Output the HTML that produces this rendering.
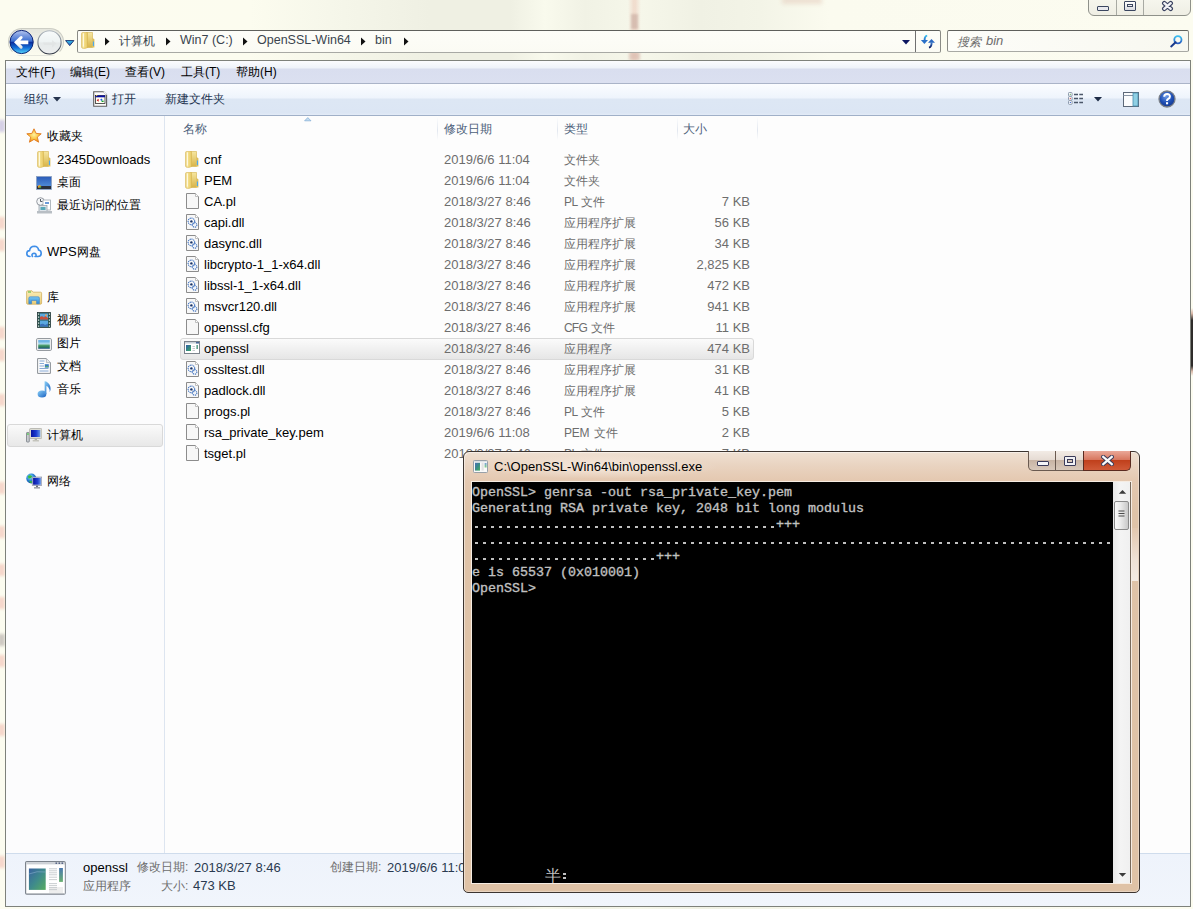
<!DOCTYPE html><html><head><meta charset="utf-8"><style>
*{margin:0;padding:0;box-sizing:border-box}
html,body{width:1193px;height:909px;overflow:hidden}
body{position:relative;background:#f9f9ee;font-family:"Liberation Sans",sans-serif;font-size:13px;color:#000}
.a{position:absolute}
.t{position:absolute;white-space:nowrap;line-height:15px}
.c{font-size:12px}
.g{color:#6d6d6d}
.h{color:#1e3450}
.hd{color:#4c607a}
.mono{font-family:"Liberation Mono",monospace;-webkit-text-stroke:0.35px #c0c0c0;font-size:13.33px;line-height:16px;color:#c0c0c0;white-space:pre}
</style></head><body>
<div class="a" style="left:0px;top:0px;width:1193px;height:909px;background:linear-gradient(90deg,#fcfcf0 0px,#fcfcef 250px,#f6f7ea 330px,#eff0e3 430px,#eff0e3 510px,#f9faed 545px,#f1f2e5 585px,#f6f7ea 640px,#f0f1e4 700px,#f3f4e7 760px,#fbfbef 830px,#fcfcf0 1193px)"></div>
<div class="a" style="left:628px;top:0px;width:13px;height:60px;background:linear-gradient(90deg,rgba(240,205,190,0),rgba(236,196,180,.5) 42%,rgba(236,196,180,.5) 58%,rgba(240,205,190,0))"></div>
<div class="a" style="left:631px;top:14px;width:7px;height:15px;background:rgba(185,150,140,.45);filter:blur(1.3px)"></div>
<div class="a" style="left:629px;top:52px;width:11px;height:8px;background:rgba(205,165,150,.45);filter:blur(1.5px)"></div>
<div class="a" style="left:634px;top:31px;width:3px;height:21px;background:rgba(236,200,186,.25)"></div>
<div class="a" style="left:782px;top:-3px;width:40px;height:7px;background:rgba(215,175,155,.32);filter:blur(2px)"></div>
<div class="a" style="left:-2px;top:120px;width:7px;height:12px;background:rgba(180,170,220,.55);filter:blur(1.5px)"></div>
<div class="a" style="left:-2px;top:217px;width:7px;height:12px;background:rgba(240,170,160,.45);filter:blur(1.5px)"></div>
<div class="a" style="left:-2px;top:239px;width:7px;height:12px;background:rgba(240,170,160,.45);filter:blur(1.5px)"></div>
<div class="a" style="left:-2px;top:327px;width:7px;height:12px;background:rgba(240,170,160,.45);filter:blur(1.5px)"></div>
<div class="a" style="left:-2px;top:349px;width:7px;height:12px;background:rgba(240,170,160,.45);filter:blur(1.5px)"></div>
<div class="a" style="left:-2px;top:394px;width:7px;height:12px;background:rgba(240,170,160,.45);filter:blur(1.5px)"></div>
<div class="a" style="left:-2px;top:482px;width:7px;height:12px;background:rgba(240,170,160,.45);filter:blur(1.5px)"></div>
<div class="a" style="left:-2px;top:526px;width:7px;height:12px;background:rgba(240,170,160,.45);filter:blur(1.5px)"></div>
<div class="a" style="left:-2px;top:564px;width:7px;height:12px;background:rgba(240,170,160,.45);filter:blur(1.5px)"></div>
<div class="a" style="left:-2px;top:597px;width:7px;height:12px;background:rgba(240,170,160,.45);filter:blur(1.5px)"></div>
<div class="a" style="left:-2px;top:634px;width:7px;height:12px;background:rgba(150,140,140,.45);filter:blur(1.5px)"></div>
<div class="a" style="left:-2px;top:655px;width:7px;height:12px;background:rgba(240,170,160,.45);filter:blur(1.5px)"></div>
<div class="a" style="left:-2px;top:724px;width:7px;height:12px;background:rgba(240,170,160,.45);filter:blur(1.5px)"></div>
<div class="a" style="left:-2px;top:856px;width:7px;height:12px;background:rgba(240,170,160,.45);filter:blur(1.5px)"></div>
<div class="a" style="left:1191px;top:308px;width:2px;height:68px;background:linear-gradient(rgba(240,200,180,0),#d8b8a8 8%,#2e2c2a 18%,#2e2c2a 85%,#d8b8a8 93%,rgba(240,200,180,0))"></div>
<div class="a" style="left:1088px;top:-4px;width:103px;height:20px;border:1px solid #8f918a;border-radius:0 0 6px 6px;background:linear-gradient(#f7f7ef,#efeee4)"></div>
<div class="a" style="left:1116px;top:0px;width:1px;height:15px;background:#a8aaa3"></div>
<div class="a" style="left:1143px;top:0px;width:1px;height:15px;background:#a8aaa3"></div>
<div class="a" style="left:1097px;top:6px;width:12px;height:5px;border:1px solid #3b4660;border-radius:1px;background:#e8e9ee"></div>
<div class="a" style="left:1124px;top:1px;width:12px;height:10px;border:1px solid #3b4660;border-radius:1px;background:linear-gradient(#fff,#d8dae0)"></div>
<div class="a" style="left:1127px;top:4px;width:6px;height:3px;border:1px solid #3b4660;background:#f0f0f2"></div>
<svg class="a" style="left:1161px;top:0px" width="13" height="12" viewBox="0 0 13 12"><path d="M3.3 3.2 L9.7 8.8 M9.7 3.2 L3.3 8.8" stroke="#3a4260" stroke-width="4.6" stroke-linecap="round"/><path d="M3.3 3.2 L9.7 8.8 M9.7 3.2 L3.3 8.8" stroke="#f2f3f6" stroke-width="2.4" stroke-linecap="round"/></svg>
<div class="a" style="left:8px;top:28px;width:56px;height:28px;border-radius:14px;background:linear-gradient(rgba(225,226,218,.9),rgba(235,236,228,.3) 70%,rgba(240,240,232,0));border:1px solid rgba(200,201,192,.9);border-bottom-color:transparent"></div>
<svg class="a" style="left:9px;top:29px" width="26" height="26" viewBox="0 0 26 26"><defs><linearGradient id="bk" x1="0" y1="0" x2="0" y2="1"><stop offset="0" stop-color="#b8c8f0"/><stop offset=".2" stop-color="#7e9ce0"/><stop offset=".47" stop-color="#3a6ed0"/><stop offset=".5" stop-color="#0a2a9a"/><stop offset=".75" stop-color="#1470d8"/><stop offset="1" stop-color="#58d8fa"/></linearGradient><linearGradient id="ar" x1="0" y1="0" x2="0" y2="1"><stop offset="0" stop-color="#fff"/><stop offset=".6" stop-color="#fff"/><stop offset="1" stop-color="#d8d8d8"/></linearGradient></defs>
<circle cx="12.6" cy="13" r="11.6" fill="url(#bk)" stroke="#0c2478" stroke-width="1"/>
<path d="M5 13.3 L11 7.5 Q12.2 6.4 13.3 7.5 Q14.1 8.6 13.2 9.6 L11.3 11.5 L19.3 11.5 L19.3 15.2 L11.3 15.2 L13.2 17.1 Q14.1 18.2 13.3 19.2 Q12.2 20.3 11 19.2 Z" fill="url(#ar)"/></svg>
<svg class="a" style="left:36px;top:29px" width="27" height="27" viewBox="0 0 27 27"><defs><linearGradient id="fw" x1="0" y1="0" x2="0" y2="1"><stop offset="0" stop-color="#f8fbfb"/><stop offset=".48" stop-color="#eef3f3"/><stop offset=".52" stop-color="#e6eaea"/><stop offset="1" stop-color="#eceeee"/></linearGradient><linearGradient id="fws" x1="0" y1="0" x2="0" y2="1"><stop offset="0" stop-color="#b0b8c0"/><stop offset=".5" stop-color="#808890"/><stop offset="1" stop-color="#2e3442"/></linearGradient></defs>
<circle cx="13.5" cy="13.4" r="11.6" fill="url(#fw)" stroke="url(#fws)" stroke-width="1.1"/>
<path d="M7 13.5 L16 13.5 L16 11 L20.5 14.5 L16 18.5 L16 16 L8 16 Z" fill="#dfe3e3" opacity=".7"/></svg>
<svg class="a" style="left:65px;top:40px" width="10" height="7" viewBox="0 0 10 7"><defs><linearGradient id="dd" x1="0" y1="0" x2="0" y2="1"><stop offset="0" stop-color="#38c8f0"/><stop offset="1" stop-color="#2a5cc0"/></linearGradient></defs><path d="M0.6 0.6 L8.9 0.6 L4.75 5.6 Z" fill="url(#dd)" stroke="#10286a" stroke-width=".9" stroke-linejoin="round"/></svg>
<div class="a" style="left:77px;top:30px;width:864px;height:23px;border:1px solid #5f605c;border-bottom-color:#a8a9a4;border-left-color:#8a8b86;border-right-color:#8a8b86;border-radius:2px;background:linear-gradient(#fdfdf8,#fbfbf4)"></div>
<div class="a" style="left:915px;top:31px;width:1px;height:21px;background:#707070"></div>
<svg class="a" style="left:81px;top:32px" width="14" height="17" viewBox="0 0 14 17"><defs><linearGradient id="fa" x1="0" y1="0" x2="1" y2="0"><stop offset="0" stop-color="#e2c25c"/><stop offset=".25" stop-color="#fbf0b8"/><stop offset=".45" stop-color="#f4de88"/><stop offset="1" stop-color="#e6c865"/></linearGradient><linearGradient id="fab" x1="0" y1="0" x2="0" y2="1"><stop offset="0" stop-color="#f6e6a0"/><stop offset="1" stop-color="#d8b448"/></linearGradient></defs>
<path d="M5.5 0.5 L11.5 0.5 L11.5 15.5 L6 15.5 Z" fill="url(#fab)" stroke="#d4b24c" stroke-width=".6"/><path d="M11.5 6 L13.4 7.2 L13.4 15.6 L11.5 15.6Z" fill="#dcbc58"/><rect x="11.9" y="9.5" width="1.1" height="4.5" fill="#4aa8ec"/>
<path d="M0.6 1.5 Q0.6 0.5 1.6 0.5 L6.5 0.5 L6.5 15.6 Q4 16.8 1.6 16.3 Q0.6 16.1 0.6 15 Z" fill="url(#fa)" stroke="#d6b650" stroke-width=".6"/><path d="M2.4 1.6 L2.4 14.5" stroke="#fffbe8" stroke-width="1.1" opacity=".9"/></svg>
<svg class="a" style="left:105px;top:37px" width="5" height="9" viewBox="0 0 5 9"><path d="M0 0.5 L4.5 4.5 L0 8.5 Z" fill="#111"/></svg>
<svg class="a" style="left:166px;top:37px" width="5" height="9" viewBox="0 0 5 9"><path d="M0 0.5 L4.5 4.5 L0 8.5 Z" fill="#111"/></svg>
<svg class="a" style="left:243px;top:37px" width="5" height="9" viewBox="0 0 5 9"><path d="M0 0.5 L4.5 4.5 L0 8.5 Z" fill="#111"/></svg>
<svg class="a" style="left:361px;top:37px" width="5" height="9" viewBox="0 0 5 9"><path d="M0 0.5 L4.5 4.5 L0 8.5 Z" fill="#111"/></svg>
<svg class="a" style="left:404px;top:37px" width="5" height="9" viewBox="0 0 5 9"><path d="M0 0.5 L4.5 4.5 L0 8.5 Z" fill="#111"/></svg>
<div class="t " style="left:119px;top:33px;color:#3a444e"><span class="c">计算机</span></div>
<div class="t " style="left:180px;top:33px;color:#3a444e;font-size:12.5px">Win7 (C:)</div>
<div class="t " style="left:257px;top:33px;color:#3a444e;font-size:12.5px">OpenSSL-Win64</div>
<div class="t " style="left:375px;top:33px;color:#3a444e;font-size:12.5px">bin</div>
<svg class="a" style="left:902px;top:40px" width="8" height="5" viewBox="0 0 8 5"><path d="M0 0 L8 0 L4 4.5 Z" fill="#0c1660"/></svg>
<svg class="a" style="left:920px;top:33px" width="16" height="16" viewBox="0 0 16 16"><defs><linearGradient id="rf1" x1="0" y1="0" x2="0" y2="1"><stop offset="0" stop-color="#38c0f0"/><stop offset="1" stop-color="#2a6ac8"/></linearGradient><linearGradient id="rf2" x1="0" y1="0" x2="0" y2="1"><stop offset="0" stop-color="#3a80d8"/><stop offset="1" stop-color="#0a1a60"/></linearGradient></defs>
<path d="M7.2 2.6 Q4.6 3 4.6 7.2" stroke="url(#rf1)" stroke-width="1.9" fill="none"/><path d="M0.9 7 L8 7 L4.4 10.9 Z" fill="#2a70c8"/>
<path d="M11.6 9.4 Q11.6 13.8 9 14.6" stroke="url(#rf2)" stroke-width="1.9" fill="none"/><path d="M8 9.7 L15 9.7 L11.5 6 Z" fill="#2a68c0"/></svg>
<div class="a" style="left:947px;top:30px;width:242px;height:22px;border:1px solid #5f605c;border-bottom-color:#a8a9a4;border-left-color:#8a8b86;border-right-color:#8a8b86;border-radius:2px;background:linear-gradient(90deg,#fdfdf9,#f8f8f0)"></div>
<div class="t " style="left:957px;top:34px;color:#6e6e6e;font-style:italic"><span class="c">搜索</span></div>
<div class="t " style="left:986px;top:33px;color:#6e6e6e;font-style:italic">bin</div>
<svg class="a" style="left:1169px;top:35px" width="14" height="14" viewBox="0 0 14 14"><defs><linearGradient id="sr" x1="0" y1="0" x2="0" y2="1"><stop offset="0" stop-color="#3cc0f0"/><stop offset="1" stop-color="#2a5cc0"/></linearGradient></defs><circle cx="8.9" cy="4.8" r="3.6" stroke="url(#sr)" stroke-width="1.8" fill="none"/><path d="M6.6 7.3 L2.2 11.4" stroke="#1a3a8c" stroke-width="2" stroke-linecap="round"/></svg>
<div class="a" style="left:5px;top:60px;width:1186px;height:847px;border:1px solid #7e817b;background:#fdfdfd"></div>
<div class="a" style="left:6px;top:61px;width:1184px;height:23px;background:linear-gradient(#fbfcfe 0,#eef2f9 7px,#d9deef 8px,#dbe0f0 22px);border-bottom:1px solid #aab4c8"></div>
<div class="t " style="left:16px;top:65px;font-size:12px"><span class="c">文件</span>(F)</div>
<div class="t " style="left:70px;top:65px;font-size:12px"><span class="c">编辑</span>(E)</div>
<div class="t " style="left:125px;top:65px;font-size:12px"><span class="c">查看</span>(V)</div>
<div class="t " style="left:181px;top:65px;font-size:12px"><span class="c">工具</span>(T)</div>
<div class="t " style="left:236px;top:65px;font-size:12px"><span class="c">帮助</span>(H)</div>
<div class="a" style="left:6px;top:84px;width:1184px;height:32px;background:linear-gradient(#fbfdff 0,#eef4fc 14px,#dde7f4 15px,#dce6f4 29px,#e4ecf7 31px);border-bottom:1px solid #a0b0c8"></div>
<div class="t h" style="left:24px;top:92px;font-size:12px"><span class="c">组织</span></div>
<svg class="a" style="left:53px;top:97px" width="8" height="5" viewBox="0 0 8 5"><path d="M0 0 L8 0 L4 4.5Z" fill="#26344d"/></svg>
<svg class="a" style="left:93px;top:91px" width="15" height="17" viewBox="0 0 15 17"><path d="M0.7 0.7 H10.6 L13.6 3.7 V15.3 H0.7Z" fill="#fbfbfb" stroke="#5e5e5e" stroke-width="1.1"/><path d="M10.6 0.7 L13.6 3.7" stroke="#fff" stroke-width="1"/><rect x="2.4" y="4.4" width="9.6" height="8" fill="#fffff4" stroke="#111" stroke-width=".7"/><rect x="2.4" y="4.4" width="9.6" height="1.9" fill="#0a10a0"/><circle cx="3.6" cy="4.6" r=".7" fill="#f0d020"/><path d="M3.6 9.3 L5.6 7.8 L5.6 10.8Z" fill="#d01010"/><path d="M8.4 7.6 L9.6 8.8 L8.4 10 L7.2 8.8Z" fill="#1a60e0"/><rect x="8.6" y="9.6" width="2" height="1.4" fill="#18a030"/></svg>
<div class="t h" style="left:112px;top:92px;font-size:12px"><span class="c">打开</span></div>
<div class="t h" style="left:165px;top:92px;font-size:12px"><span class="c">新建文件夹</span></div>
<svg class="a" style="left:1067px;top:92px" width="18" height="14" viewBox="0 0 18 14"><g fill="#fff" stroke="#8090a4" stroke-width=".9"><rect x="1.5" y="0.5" width="3.6" height="3.6" rx=".8"/><rect x="1.5" y="4.6" width="3.6" height="3.6" rx=".8"/><rect x="1.5" y="8.7" width="3.6" height="3.6" rx=".8"/></g><rect x="2.8" y="1.8" width="1" height="1" fill="#3a9a3a"/><rect x="2.8" y="5.9" width="1" height="1" fill="#e02020"/><rect x="2.8" y="10" width="1" height="1" fill="#2050d0"/>
<g stroke="#4a5668" stroke-width="1.3"><path d="M7 2.5 H11 M12.3 2.5 H16 M7 6.5 H11 M12.3 6.5 H16 M7 10.5 H11 M12.3 10.5 H16"/></g></svg>
<svg class="a" style="left:1094px;top:97px" width="8" height="5" viewBox="0 0 8 5"><path d="M0 0 L8 0 L4 4.5Z" fill="#1d2b45"/></svg>
<svg class="a" style="left:1123px;top:92px" width="17" height="15" viewBox="0 0 17 15"><rect x="0.5" y="0.5" width="15" height="14" fill="#fbfcfd" stroke="#5c6878"/><path d="M0.5 3.5 H10" stroke="#8a96a6"/><rect x="10" y="1" width="5" height="13" fill="#8fd0e4" stroke="#4a90b0" stroke-width=".8"/></svg>
<svg class="a" style="left:1158px;top:90px" width="18" height="18" viewBox="0 0 18 18"><defs><radialGradient id="hp" cx="45%" cy="35%" r="65%"><stop offset="0" stop-color="#6a9ae8"/><stop offset=".6" stop-color="#1f4fb4"/><stop offset="1" stop-color="#14378c"/></radialGradient></defs><circle cx="9" cy="9" r="8" fill="url(#hp)" stroke="#7b8088" stroke-width="1.3"/>
<path d="M6.2 6.8 Q6.3 4 9.1 4 Q12 4.1 11.9 6.6 Q11.8 8.2 9.9 9.1 Q9 9.6 9 11" stroke="#fff" stroke-width="2" fill="none"/><rect x="8" y="12.2" width="2.1" height="2.1" fill="#fff"/></svg>
<div class="a" style="left:6px;top:116px;width:158px;height:737px;background:#fcfcfd"></div>
<div class="a" style="left:164px;top:116px;width:1px;height:737px;background:#dde5f0"></div>
<svg class="a" style="left:26px;top:128px" width="16" height="15" viewBox="0 0 16 15"><defs><radialGradient id="st" cx="50%" cy="45%" r="55%"><stop offset="0" stop-color="#fff1a0"/><stop offset=".6" stop-color="#f9c23c"/><stop offset="1" stop-color="#ef8a1a"/></radialGradient></defs><path d="M8 0.8 L10.1 5.4 L15.2 5.8 L11.3 9.1 L12.6 14.2 L8 11.4 L3.4 14.2 L4.7 9.1 L0.8 5.8 L5.9 5.4 Z" fill="url(#st)" stroke="#e07a20" stroke-width=".9"/></svg>
<div class="t " style="left:47px;top:129px;font-size:12px"><span class="c">收藏夹</span></div>
<svg class="a" style="left:37px;top:151px" width="14" height="17" viewBox="0 0 14 17"><defs><linearGradient id="f1" x1="0" y1="0" x2="1" y2="0"><stop offset="0" stop-color="#e2c25c"/><stop offset=".25" stop-color="#fbf0b8"/><stop offset=".45" stop-color="#f4de88"/><stop offset="1" stop-color="#e6c865"/></linearGradient><linearGradient id="f1b" x1="0" y1="0" x2="0" y2="1"><stop offset="0" stop-color="#f6e6a0"/><stop offset="1" stop-color="#d8b448"/></linearGradient></defs>
<path d="M5.5 0.5 L11.5 0.5 L11.5 15.5 L6 15.5 Z" fill="url(#f1b)" stroke="#d4b24c" stroke-width=".6"/><path d="M11.5 6 L13.4 7.2 L13.4 15.6 L11.5 15.6Z" fill="#dcbc58"/><rect x="11.9" y="9.5" width="1.1" height="4.5" fill="#4aa8ec"/>
<path d="M0.6 1.5 Q0.6 0.5 1.6 0.5 L6.5 0.5 L6.5 15.6 Q4 16.8 1.6 16.3 Q0.6 16.1 0.6 15 Z" fill="url(#f1)" stroke="#d6b650" stroke-width=".6"/><path d="M2.4 1.6 L2.4 14.5" stroke="#fffbe8" stroke-width="1.1" opacity=".9"/></svg>
<div class="t " style="left:57px;top:152px;">2345Downloads</div>
<svg class="a" style="left:36px;top:176px" width="16" height="14" viewBox="0 0 16 14"><defs><linearGradient id="dk" x1="0" y1="0" x2="0" y2="1"><stop offset="0" stop-color="#2a5ab8"/><stop offset="1" stop-color="#5a9ae0"/></linearGradient></defs><rect x="0.5" y="0.5" width="15" height="13" fill="url(#dk)" stroke="#8aa0c0" stroke-width=".8"/><rect x="1" y="10" width="14" height="3" fill="#2a2f3a"/><circle cx="3.5" cy="10.5" r="1.6" fill="#f0a030"/><circle cx="4.2" cy="11.2" r="1" fill="#40a040"/></svg>
<div class="t " style="left:57px;top:175px;font-size:12px"><span class="c">桌面</span></div>
<svg class="a" style="left:36px;top:197px" width="16" height="17" viewBox="0 0 16 17"><circle cx="4.5" cy="4.5" r="3.8" fill="#f4f6f8" stroke="#8a9098" stroke-width=".9"/><path d="M4.5 2 V4.5 H6.5" stroke="#404650" stroke-width=".9" fill="none"/><rect x="7" y="3" width="7.5" height="10" fill="#fff" stroke="#a0a8b0" stroke-width=".8"/><rect x="9" y="5" width="4" height="2" fill="#6a9ad8"/><rect x="3" y="8.5" width="8" height="6" fill="#dde4ea" stroke="#9aa3ac" stroke-width=".8"/><rect x="4.5" y="10" width="5" height="3" fill="#58a8b8"/><rect x="1" y="14" width="15" height="2.5" fill="#b8bec4"/></svg>
<div class="t " style="left:57px;top:198px;font-size:12px"><span class="c">最近访问的位置</span></div>
<svg class="a" style="left:26px;top:245px" width="16" height="13" viewBox="0 0 16 13"><path d="M4 11.5 Q0.8 11.5 0.8 8.5 Q0.8 5.8 3.6 5.6 Q4.2 1.2 8.4 1.2 Q12 1.4 12.6 5 Q15.2 5.4 15.2 8.3 Q15.2 11.5 12 11.5 L9 11.5 M6.5 11.5 Q5 9 8 8.3 Q10.5 8.5 10 11" stroke="#3f8ee8" stroke-width="1.6" fill="none" stroke-linecap="round"/></svg>
<div class="t " style="left:47px;top:244px;">WPS<span class="c">网盘</span></div>
<svg class="a" style="left:26px;top:290px" width="17" height="15" viewBox="0 0 17 15"><defs><linearGradient id="lbf" x1="0" y1="0" x2="0" y2="1"><stop offset="0" stop-color="#fbeeb8"/><stop offset="1" stop-color="#e8cc78"/></linearGradient><linearGradient id="lbb" x1="0" y1="0" x2="0" y2="1"><stop offset="0" stop-color="#7ac8f4"/><stop offset="1" stop-color="#2a88d8"/></linearGradient></defs><path d="M0.6 2 Q0.6 0.8 1.8 0.8 L6 0.8 L7.2 2.2 L14.6 2.2 Q15.6 2.2 15.6 3.2 L15.6 13 Q15.6 14.2 14.4 14.2 L1.8 14.2 Q0.6 14.2 0.6 13Z" fill="url(#lbf)" stroke="#d0b060" stroke-width=".8"/><rect x="2" y="1.4" width="3" height="1.2" fill="#6ac04a"/><path d="M2.8 13.8 L2.8 8.2 Q2.8 6.8 4.2 6.8 L12 6.8 Q13.4 6.8 13.4 8.2 L13.4 13.8 L10.6 13.8 L10.6 10.4 L5.6 10.4 L5.6 13.8Z" fill="url(#lbb)" stroke="#3a80c8" stroke-width=".6"/></svg>
<div class="t " style="left:47px;top:290px;font-size:12px"><span class="c">库</span></div>
<svg class="a" style="left:37px;top:312px" width="14" height="16" viewBox="0 0 14 16"><rect x="0.5" y="0.5" width="13" height="15" fill="#24504c" stroke="#1a3030" stroke-width=".7"/><rect x="3" y="1.5" width="8" height="6" fill="#5aa8e0"/><rect x="3" y="8.5" width="8" height="6" fill="#5aa8e0"/><path d="M3 5 Q5 3.5 7 5.5 L8 4 L11 6 V7.5 H3Z" fill="#c8503a"/><path d="M3 12.5 Q6 11 8 13 L11 11.5 V14.5 H3Z" fill="#3a70b8"/><circle cx="9" cy="3.2" r="1" fill="#f0a050"/><g fill="#f0f4f4"><rect x="1" y="1.5" width="1.2" height="1.2"/><rect x="1" y="4.5" width="1.2" height="1.2"/><rect x="1" y="7.5" width="1.2" height="1.2"/><rect x="1" y="10.5" width="1.2" height="1.2"/><rect x="1" y="13.5" width="1.2" height="1.2"/><rect x="11.8" y="1.5" width="1.2" height="1.2"/><rect x="11.8" y="4.5" width="1.2" height="1.2"/><rect x="11.8" y="7.5" width="1.2" height="1.2"/><rect x="11.8" y="10.5" width="1.2" height="1.2"/><rect x="11.8" y="13.5" width="1.2" height="1.2"/></g></svg>
<div class="t " style="left:57px;top:313px;font-size:12px"><span class="c">视频</span></div>
<svg class="a" style="left:36px;top:338px" width="16" height="13" viewBox="0 0 16 13"><defs><linearGradient id="pc" x1="0" y1="0" x2="0" y2="1"><stop offset="0" stop-color="#4aa0e0"/><stop offset=".45" stop-color="#b8e0f0"/><stop offset=".55" stop-color="#58a878"/><stop offset=".8" stop-color="#2a7a58"/><stop offset="1" stop-color="#2a5a90"/></linearGradient></defs><rect x="0.6" y="0.6" width="14.8" height="11.8" rx="1" fill="#f8f8f8" stroke="#8a9096" stroke-width="1"/><rect x="2.2" y="2.2" width="11.6" height="8.6" fill="url(#pc)"/></svg>
<div class="t " style="left:57px;top:336px;font-size:12px"><span class="c">图片</span></div>
<svg class="a" style="left:37px;top:358px" width="14" height="16" viewBox="0 0 14 16"><path d="M0.6 0.6 H9.4 L13.4 4.6 V15.4 H0.6Z" fill="#fcfcfd" stroke="#8a9096" stroke-width="1"/><path d="M9.4 0.6 V4.6 H13.4" fill="#e8eaee" stroke="#a0a6ac" stroke-width=".7"/><g stroke="#7aa0d0" stroke-width=".9"><path d="M2.5 3 H7.5 M2.5 5.5 H7 M2.5 8 H7 M2.5 10.5 H11.5 M2.5 13 H11.5"/></g><rect x="7.8" y="6.2" width="4" height="3.4" fill="#3a7ac0"/><rect x="8.3" y="8" width="3" height="1.2" fill="#58a868"/></svg>
<div class="t " style="left:57px;top:359px;font-size:12px"><span class="c">文档</span></div>
<svg class="a" style="left:37px;top:380px" width="15" height="18" viewBox="0 0 15 18"><defs><linearGradient id="mu" x1="0" y1="0" x2="1" y2="1"><stop offset="0" stop-color="#8ad0f8"/><stop offset="1" stop-color="#1a60c0"/></linearGradient></defs><ellipse cx="5" cy="14" rx="4.4" ry="3.5" fill="url(#mu)"/><path d="M7.6 14 V1.2 Q8.4 1.2 9.2 1.6 Q13.8 4.5 13.6 9.2 Q13.4 11 12.6 12 Q13 9.5 11.4 7.4 Q10.6 6.4 9.4 6 V14Z" fill="url(#mu)"/></svg>
<div class="t " style="left:57px;top:382px;font-size:12px"><span class="c">音乐</span></div>
<div class="a" style="left:7px;top:424px;width:156px;height:23px;border:1px solid #d9d9d9;border-radius:3px;background:linear-gradient(#fafafa,#e8e8e8)"></div>
<svg class="a" style="left:26px;top:428px" width="16" height="16" viewBox="0 0 16 16"><defs><linearGradient id="cm" x1="0" y1="0" x2="1" y2="0"><stop offset="0" stop-color="#0814a0"/><stop offset=".55" stop-color="#1a3ad0"/><stop offset="1" stop-color="#6a9ae8"/></linearGradient></defs><rect x="0.5" y="4.5" width="2.8" height="9.5" rx=".6" fill="#c8ccd0" stroke="#6a7078" stroke-width=".7"/><rect x="1.1" y="5.4" width="1.6" height="1.3" fill="#40d040"/><rect x="3.6" y="0.5" width="12.2" height="10" rx="1" fill="#dcdcd4" stroke="#a8a8a0" stroke-width=".7"/><rect x="5" y="2" width="9.3" height="7" fill="url(#cm)"/><rect x="8.6" y="10.5" width="2.4" height="1.6" fill="#b4b4ac"/><rect x="6.6" y="12.1" width="6.4" height="1.5" rx=".5" fill="#c4c4bc"/></svg>
<div class="t " style="left:47px;top:428px;font-size:12px"><span class="c">计算机</span></div>
<svg class="a" style="left:26px;top:473px" width="16" height="16" viewBox="0 0 16 16"><defs><radialGradient id="gl" cx="40%" cy="35%" r="60%"><stop offset="0" stop-color="#a8e0ff"/><stop offset=".6" stop-color="#2a88d8"/><stop offset="1" stop-color="#1050a8"/></radialGradient><linearGradient id="nm" x1="0" y1="0" x2="1" y2="0"><stop offset="0" stop-color="#0814a0"/><stop offset=".6" stop-color="#2040d0"/><stop offset="1" stop-color="#6a9ae8"/></linearGradient></defs><circle cx="5.3" cy="5.5" r="5" fill="url(#gl)"/><path d="M2 3 Q4.5 1.2 6.2 3.6 Q5 6 2.4 5.4Z M3 8 Q5.5 7.2 6.5 9.5 Q4.5 10.8 3 8Z" fill="#38c038"/><rect x="6.2" y="4" width="9.6" height="8.6" fill="#d0d4dc" stroke="#8088a0" stroke-width=".6"/><rect x="7.1" y="4.9" width="7.8" height="6.8" fill="url(#nm)"/><rect x="10" y="12.6" width="2" height="1.6" fill="#6a7080"/><rect x="8" y="14.2" width="6" height="1.3" fill="#8a9098"/></svg>
<div class="t " style="left:47px;top:474px;font-size:12px"><span class="c">网络</span></div>
<div class="t hd" style="left:183px;top:122px;font-size:12px"><span class="c">名称</span></div>
<div class="t hd" style="left:444px;top:122px;font-size:12px"><span class="c">修改日期</span></div>
<div class="t hd" style="left:564px;top:122px;font-size:12px"><span class="c">类型</span></div>
<div class="t hd" style="left:683px;top:122px;font-size:12px"><span class="c">大小</span></div>
<div class="a" style="left:437px;top:116px;width:1px;height:24px;background:linear-gradient(#fff,#e2e7ef 60%,rgba(255,255,255,0))"></div>
<div class="a" style="left:557px;top:116px;width:1px;height:24px;background:linear-gradient(#fff,#e2e7ef 60%,rgba(255,255,255,0))"></div>
<div class="a" style="left:677px;top:116px;width:1px;height:24px;background:linear-gradient(#fff,#e2e7ef 60%,rgba(255,255,255,0))"></div>
<div class="a" style="left:757px;top:116px;width:1px;height:24px;background:linear-gradient(#fff,#e2e7ef 60%,rgba(255,255,255,0))"></div>
<svg class="a" style="left:304px;top:117px" width="8" height="5" viewBox="0 0 8 5"><path d="M0.6 3.8 L3.8 0.6 L7 3.8Z" fill="#c4dcf0" stroke="#7eaad4" stroke-width=".7"/></svg>
<div class="a" style="left:180px;top:338px;width:574px;height:22px;border:1px solid #d9d9d9;border-radius:3px;background:linear-gradient(#fbfbfb,#e6e6e6)"></div>
<svg class="a" style="left:185px;top:151px" width="14" height="17" viewBox="0 0 14 17"><defs><linearGradient id="fr0" x1="0" y1="0" x2="1" y2="0"><stop offset="0" stop-color="#e2c25c"/><stop offset=".25" stop-color="#fbf0b8"/><stop offset=".45" stop-color="#f4de88"/><stop offset="1" stop-color="#e6c865"/></linearGradient><linearGradient id="fr0b" x1="0" y1="0" x2="0" y2="1"><stop offset="0" stop-color="#f6e6a0"/><stop offset="1" stop-color="#d8b448"/></linearGradient></defs>
<path d="M5.5 0.5 L11.5 0.5 L11.5 15.5 L6 15.5 Z" fill="url(#fr0b)" stroke="#d4b24c" stroke-width=".6"/><path d="M11.5 6 L13.4 7.2 L13.4 15.6 L11.5 15.6Z" fill="#dcbc58"/><rect x="11.9" y="9.5" width="1.1" height="4.5" fill="#4aa8ec"/>
<path d="M0.6 1.5 Q0.6 0.5 1.6 0.5 L6.5 0.5 L6.5 15.6 Q4 16.8 1.6 16.3 Q0.6 16.1 0.6 15 Z" fill="url(#fr0)" stroke="#d6b650" stroke-width=".6"/><path d="M2.4 1.6 L2.4 14.5" stroke="#fffbe8" stroke-width="1.1" opacity=".9"/></svg>
<div class="t " style="left:204px;top:152px;">cnf</div>
<div class="t g" style="left:444px;top:152px;">2019/6/6 11:04</div>
<div class="t g" style="left:564px;top:152px;"><span class="c">文件夹</span></div>
<svg class="a" style="left:185px;top:172px" width="14" height="17" viewBox="0 0 14 17"><defs><linearGradient id="fr1" x1="0" y1="0" x2="1" y2="0"><stop offset="0" stop-color="#e2c25c"/><stop offset=".25" stop-color="#fbf0b8"/><stop offset=".45" stop-color="#f4de88"/><stop offset="1" stop-color="#e6c865"/></linearGradient><linearGradient id="fr1b" x1="0" y1="0" x2="0" y2="1"><stop offset="0" stop-color="#f6e6a0"/><stop offset="1" stop-color="#d8b448"/></linearGradient></defs>
<path d="M5.5 0.5 L11.5 0.5 L11.5 15.5 L6 15.5 Z" fill="url(#fr1b)" stroke="#d4b24c" stroke-width=".6"/><path d="M11.5 6 L13.4 7.2 L13.4 15.6 L11.5 15.6Z" fill="#dcbc58"/><rect x="11.9" y="9.5" width="1.1" height="4.5" fill="#4aa8ec"/>
<path d="M0.6 1.5 Q0.6 0.5 1.6 0.5 L6.5 0.5 L6.5 15.6 Q4 16.8 1.6 16.3 Q0.6 16.1 0.6 15 Z" fill="url(#fr1)" stroke="#d6b650" stroke-width=".6"/><path d="M2.4 1.6 L2.4 14.5" stroke="#fffbe8" stroke-width="1.1" opacity=".9"/></svg>
<div class="t " style="left:204px;top:173px;">PEM</div>
<div class="t g" style="left:444px;top:173px;">2019/6/6 11:04</div>
<div class="t g" style="left:564px;top:173px;"><span class="c">文件夹</span></div>
<svg class="a" style="left:186px;top:193px" width="13" height="16" viewBox="0 0 13 16"><path d="M0.5 0.5 H9.5 L12.5 3.5 V15.5 H0.5Z" fill="#f7f7f7" stroke="#8c8c8c" stroke-width="1"/><path d="M9.5 0.5 V3.5 H12.5" fill="#fff" stroke="#b0b0b0" stroke-width=".8"/></svg>
<div class="t " style="left:204px;top:194px;">CA.pl</div>
<div class="t g" style="left:444px;top:194px;">2018/3/27 8:46</div>
<div class="t g" style="left:564px;top:195px;font-size:12px;letter-spacing:-0.4px">PL</div>
<div class="t g" style="left:581px;top:194px;"><span class="c">文件</span></div>
<div class="t g" style="right:443px;top:194px;">7 KB</div>
<svg class="a" style="left:186px;top:214px" width="13" height="16" viewBox="0 0 13 16"><path d="M0.5 0.5 H9.5 L12.5 3.5 V15.5 H0.5Z" fill="#f7f7f7" stroke="#8c8c8c" stroke-width="1"/><path d="M9.5 0.5 V3.5 H12.5" fill="#fff" stroke="#b0b0b0" stroke-width=".8"/><g fill="none" stroke="#3f72c0" stroke-width="1.1" stroke-dasharray="1.2 .7"><circle cx="5.4" cy="7.4" r="3.3"/><circle cx="8.6" cy="10.9" r="2.3"/></g><circle cx="5.4" cy="7.4" r="1.2" fill="#1a3468"/><circle cx="8.6" cy="10.9" r=".8" fill="#e8f0fa"/></svg>
<div class="t " style="left:204px;top:215px;">capi.dll</div>
<div class="t g" style="left:444px;top:215px;">2018/3/27 8:46</div>
<div class="t g" style="left:564px;top:215px;"><span class="c">应用程序扩展</span></div>
<div class="t g" style="right:443px;top:215px;">56 KB</div>
<svg class="a" style="left:186px;top:235px" width="13" height="16" viewBox="0 0 13 16"><path d="M0.5 0.5 H9.5 L12.5 3.5 V15.5 H0.5Z" fill="#f7f7f7" stroke="#8c8c8c" stroke-width="1"/><path d="M9.5 0.5 V3.5 H12.5" fill="#fff" stroke="#b0b0b0" stroke-width=".8"/><g fill="none" stroke="#3f72c0" stroke-width="1.1" stroke-dasharray="1.2 .7"><circle cx="5.4" cy="7.4" r="3.3"/><circle cx="8.6" cy="10.9" r="2.3"/></g><circle cx="5.4" cy="7.4" r="1.2" fill="#1a3468"/><circle cx="8.6" cy="10.9" r=".8" fill="#e8f0fa"/></svg>
<div class="t " style="left:204px;top:236px;">dasync.dll</div>
<div class="t g" style="left:444px;top:236px;">2018/3/27 8:46</div>
<div class="t g" style="left:564px;top:236px;"><span class="c">应用程序扩展</span></div>
<div class="t g" style="right:443px;top:236px;">34 KB</div>
<svg class="a" style="left:186px;top:256px" width="13" height="16" viewBox="0 0 13 16"><path d="M0.5 0.5 H9.5 L12.5 3.5 V15.5 H0.5Z" fill="#f7f7f7" stroke="#8c8c8c" stroke-width="1"/><path d="M9.5 0.5 V3.5 H12.5" fill="#fff" stroke="#b0b0b0" stroke-width=".8"/><g fill="none" stroke="#3f72c0" stroke-width="1.1" stroke-dasharray="1.2 .7"><circle cx="5.4" cy="7.4" r="3.3"/><circle cx="8.6" cy="10.9" r="2.3"/></g><circle cx="5.4" cy="7.4" r="1.2" fill="#1a3468"/><circle cx="8.6" cy="10.9" r=".8" fill="#e8f0fa"/></svg>
<div class="t " style="left:204px;top:257px;">libcrypto-1_1-x64.dll</div>
<div class="t g" style="left:444px;top:257px;">2018/3/27 8:46</div>
<div class="t g" style="left:564px;top:257px;"><span class="c">应用程序扩展</span></div>
<div class="t g" style="right:443px;top:257px;">2,825 KB</div>
<svg class="a" style="left:186px;top:277px" width="13" height="16" viewBox="0 0 13 16"><path d="M0.5 0.5 H9.5 L12.5 3.5 V15.5 H0.5Z" fill="#f7f7f7" stroke="#8c8c8c" stroke-width="1"/><path d="M9.5 0.5 V3.5 H12.5" fill="#fff" stroke="#b0b0b0" stroke-width=".8"/><g fill="none" stroke="#3f72c0" stroke-width="1.1" stroke-dasharray="1.2 .7"><circle cx="5.4" cy="7.4" r="3.3"/><circle cx="8.6" cy="10.9" r="2.3"/></g><circle cx="5.4" cy="7.4" r="1.2" fill="#1a3468"/><circle cx="8.6" cy="10.9" r=".8" fill="#e8f0fa"/></svg>
<div class="t " style="left:204px;top:278px;">libssl-1_1-x64.dll</div>
<div class="t g" style="left:444px;top:278px;">2018/3/27 8:46</div>
<div class="t g" style="left:564px;top:278px;"><span class="c">应用程序扩展</span></div>
<div class="t g" style="right:443px;top:278px;">472 KB</div>
<svg class="a" style="left:186px;top:298px" width="13" height="16" viewBox="0 0 13 16"><path d="M0.5 0.5 H9.5 L12.5 3.5 V15.5 H0.5Z" fill="#f7f7f7" stroke="#8c8c8c" stroke-width="1"/><path d="M9.5 0.5 V3.5 H12.5" fill="#fff" stroke="#b0b0b0" stroke-width=".8"/><g fill="none" stroke="#3f72c0" stroke-width="1.1" stroke-dasharray="1.2 .7"><circle cx="5.4" cy="7.4" r="3.3"/><circle cx="8.6" cy="10.9" r="2.3"/></g><circle cx="5.4" cy="7.4" r="1.2" fill="#1a3468"/><circle cx="8.6" cy="10.9" r=".8" fill="#e8f0fa"/></svg>
<div class="t " style="left:204px;top:299px;">msvcr120.dll</div>
<div class="t g" style="left:444px;top:299px;">2018/3/27 8:46</div>
<div class="t g" style="left:564px;top:299px;"><span class="c">应用程序扩展</span></div>
<div class="t g" style="right:443px;top:299px;">941 KB</div>
<svg class="a" style="left:186px;top:319px" width="13" height="16" viewBox="0 0 13 16"><path d="M0.5 0.5 H9.5 L12.5 3.5 V15.5 H0.5Z" fill="#f7f7f7" stroke="#8c8c8c" stroke-width="1"/><path d="M9.5 0.5 V3.5 H12.5" fill="#fff" stroke="#b0b0b0" stroke-width=".8"/></svg>
<div class="t " style="left:204px;top:320px;">openssl.cfg</div>
<div class="t g" style="left:444px;top:320px;">2018/3/27 8:46</div>
<div class="t g" style="left:564px;top:321px;font-size:12px;letter-spacing:-0.8px">CFG</div>
<div class="t g" style="left:591px;top:320px;"><span class="c">文件</span></div>
<div class="t g" style="right:443px;top:320px;">11 KB</div>
<svg class="a" style="left:184px;top:341px" width="16" height="13" viewBox="0 0 16 13"><defs><linearGradient id="ex" x1="0" y1="0" x2="1" y2="1"><stop offset="0" stop-color="#2f5fa8"/><stop offset="1" stop-color="#3aa860"/></linearGradient></defs><rect x="0.5" y="0.5" width="15" height="12" fill="#fff" stroke="#7c838c" stroke-width="1"/><rect x="1" y="1" width="14" height="1.5" fill="#c8d0d8"/><rect x="12" y="1" width="3" height="1.5" fill="#4a6a9a"/><rect x="2" y="4" width="5" height="6" fill="url(#ex)"/><path d="M8.5 5.5 H11 M8.5 7.5 H11 M8.5 9.5 H11" stroke="#b8bcc0" stroke-width=".8"/><rect x="12.5" y="4" width="1.3" height="4" fill="#3a8a70"/></svg>
<div class="t " style="left:204px;top:341px;">openssl</div>
<div class="t g" style="left:444px;top:341px;">2018/3/27 8:46</div>
<div class="t g" style="left:564px;top:341px;"><span class="c">应用程序</span></div>
<div class="t g" style="right:443px;top:341px;">474 KB</div>
<svg class="a" style="left:186px;top:361px" width="13" height="16" viewBox="0 0 13 16"><path d="M0.5 0.5 H9.5 L12.5 3.5 V15.5 H0.5Z" fill="#f7f7f7" stroke="#8c8c8c" stroke-width="1"/><path d="M9.5 0.5 V3.5 H12.5" fill="#fff" stroke="#b0b0b0" stroke-width=".8"/><g fill="none" stroke="#3f72c0" stroke-width="1.1" stroke-dasharray="1.2 .7"><circle cx="5.4" cy="7.4" r="3.3"/><circle cx="8.6" cy="10.9" r="2.3"/></g><circle cx="5.4" cy="7.4" r="1.2" fill="#1a3468"/><circle cx="8.6" cy="10.9" r=".8" fill="#e8f0fa"/></svg>
<div class="t " style="left:204px;top:362px;">ossltest.dll</div>
<div class="t g" style="left:444px;top:362px;">2018/3/27 8:46</div>
<div class="t g" style="left:564px;top:362px;"><span class="c">应用程序扩展</span></div>
<div class="t g" style="right:443px;top:362px;">31 KB</div>
<svg class="a" style="left:186px;top:382px" width="13" height="16" viewBox="0 0 13 16"><path d="M0.5 0.5 H9.5 L12.5 3.5 V15.5 H0.5Z" fill="#f7f7f7" stroke="#8c8c8c" stroke-width="1"/><path d="M9.5 0.5 V3.5 H12.5" fill="#fff" stroke="#b0b0b0" stroke-width=".8"/><g fill="none" stroke="#3f72c0" stroke-width="1.1" stroke-dasharray="1.2 .7"><circle cx="5.4" cy="7.4" r="3.3"/><circle cx="8.6" cy="10.9" r="2.3"/></g><circle cx="5.4" cy="7.4" r="1.2" fill="#1a3468"/><circle cx="8.6" cy="10.9" r=".8" fill="#e8f0fa"/></svg>
<div class="t " style="left:204px;top:383px;">padlock.dll</div>
<div class="t g" style="left:444px;top:383px;">2018/3/27 8:46</div>
<div class="t g" style="left:564px;top:383px;"><span class="c">应用程序扩展</span></div>
<div class="t g" style="right:443px;top:383px;">41 KB</div>
<svg class="a" style="left:186px;top:403px" width="13" height="16" viewBox="0 0 13 16"><path d="M0.5 0.5 H9.5 L12.5 3.5 V15.5 H0.5Z" fill="#f7f7f7" stroke="#8c8c8c" stroke-width="1"/><path d="M9.5 0.5 V3.5 H12.5" fill="#fff" stroke="#b0b0b0" stroke-width=".8"/></svg>
<div class="t " style="left:204px;top:404px;">progs.pl</div>
<div class="t g" style="left:444px;top:404px;">2018/3/27 8:46</div>
<div class="t g" style="left:564px;top:405px;font-size:12px;letter-spacing:-0.4px">PL</div>
<div class="t g" style="left:581px;top:404px;"><span class="c">文件</span></div>
<div class="t g" style="right:443px;top:404px;">5 KB</div>
<svg class="a" style="left:186px;top:424px" width="13" height="16" viewBox="0 0 13 16"><path d="M0.5 0.5 H9.5 L12.5 3.5 V15.5 H0.5Z" fill="#f7f7f7" stroke="#8c8c8c" stroke-width="1"/><path d="M9.5 0.5 V3.5 H12.5" fill="#fff" stroke="#b0b0b0" stroke-width=".8"/></svg>
<div class="t " style="left:204px;top:425px;">rsa_private_key.pem</div>
<div class="t g" style="left:444px;top:425px;">2019/6/6 11:08</div>
<div class="t g" style="left:564px;top:426px;font-size:12px;letter-spacing:-0.2px">PEM</div>
<div class="t g" style="left:594px;top:425px;"><span class="c">文件</span></div>
<div class="t g" style="right:443px;top:425px;">2 KB</div>
<svg class="a" style="left:186px;top:445px" width="13" height="16" viewBox="0 0 13 16"><path d="M0.5 0.5 H9.5 L12.5 3.5 V15.5 H0.5Z" fill="#f7f7f7" stroke="#8c8c8c" stroke-width="1"/><path d="M9.5 0.5 V3.5 H12.5" fill="#fff" stroke="#b0b0b0" stroke-width=".8"/></svg>
<div class="t " style="left:204px;top:446px;">tsget.pl</div>
<div class="t g" style="left:444px;top:446px;">2018/3/27 8:46</div>
<div class="t g" style="left:564px;top:447px;font-size:12px;letter-spacing:-0.4px">PL</div>
<div class="t g" style="left:581px;top:446px;"><span class="c">文件</span></div>
<div class="t g" style="right:443px;top:446px;">7 KB</div>
<div class="a" style="left:6px;top:853px;width:1184px;height:53px;background:linear-gradient(#eef3fb,#f1f5fc);border-top:1px solid #cfdcec"></div>
<svg class="a" style="left:25px;top:861px" width="41" height="34" viewBox="0 0 41 34"><defs><linearGradient id="sx" x1="0" y1="0" x2="1" y2="1"><stop offset="0" stop-color="#3a62a0"/><stop offset=".5" stop-color="#3e8a8c"/><stop offset="1" stop-color="#58ac60"/></linearGradient><linearGradient id="sb" x1="0" y1="0" x2="0" y2="1"><stop offset="0" stop-color="#4a78b0"/><stop offset="1" stop-color="#6ab070"/></linearGradient></defs><rect x="0.6" y="0.6" width="39.6" height="32.6" rx="1.2" fill="#fff" stroke="#7c838c" stroke-width="1.2"/><rect x="1.2" y="1.2" width="38.4" height="2.2" fill="#cdd1d6"/><g fill="#5a6888"><rect x="30.5" y="1.4" width="1.6" height="1.6"/><rect x="33.5" y="1.4" width="1.6" height="1.6"/><rect x="36.5" y="1.4" width="1.6" height="1.6"/></g><rect x="39" y="3.5" width="1" height="29" fill="#e8eaec"/><path d="M24 26 H38 V32 H24Z" fill="#eeeeee"/><rect x="3.9" y="7.5" width="16.8" height="21.4" fill="url(#sx)"/><path d="M3.9 13 Q12 9.5 20.7 11" stroke="#8ab0d0" stroke-width=".8" fill="none" opacity=".7"/><g stroke="#c4c8cc" stroke-width=".9"><path d="M24 7.8 H32 M24 9.8 H32 M24 11.8 H32 M24 13.8 H32 M24 16.2 H32 M24 18.6 H32 M24 22.6 H32 M24 24.6 H32 M24 26.6 H32 M24 28.6 H32"/></g><rect x="34.1" y="7" width="3.8" height="13.9" fill="url(#sb)"/></svg>
<div class="t " style="left:83px;top:860px;">openssl</div>
<div class="t g" style="left:137px;top:860px;font-size:12px"><span class="c">修改日期</span>:</div>
<div class="t " style="left:194px;top:860px;color:#2a3a50">2018/3/27 8:46</div>
<div class="t g" style="left:330px;top:860px;font-size:12px"><span class="c">创建日期</span>:</div>
<div class="t " style="left:387px;top:860px;color:#2a3a50">2019/6/6 11:08</div>
<div class="t g" style="left:83px;top:879px;font-size:12px"><span class="c">应用程序</span></div>
<div class="t g" style="left:161px;top:879px;font-size:12px"><span class="c">大小</span>:</div>
<div class="t " style="left:193px;top:878px;color:#2a3a50">473 KB</div>
<div class="a" style="left:463px;top:451px;width:677px;height:442px;border:1px solid #3c3430;border-radius:6px 6px 5px 5px;background:linear-gradient(#efe0d2 0,#e9d3c0 14px,#e4c8b0 29px,#dfc3a8 60px,#dfc2a6 100%);box-shadow:inset 1px 1px 0 rgba(255,255,255,.45),inset -1px -1px 0 rgba(255,255,255,.3)"></div>
<div class="a" style="left:480px;top:455px;width:240px;height:24px;border-radius:12px;background:radial-gradient(ellipse at 50% 50%,rgba(255,250,245,.55),rgba(255,250,245,0) 70%)"></div>
<svg class="a" style="left:473px;top:460px" width="15" height="13" viewBox="0 0 15 13"><defs><linearGradient id="cx" x1="0" y1="0" x2="1" y2="1"><stop offset="0" stop-color="#4a70b8"/><stop offset=".5" stop-color="#3a8a88"/><stop offset="1" stop-color="#48b060"/></linearGradient><linearGradient id="cx2" x1="0" y1="0" x2="0" y2="1"><stop offset="0" stop-color="#7aa0d8"/><stop offset="1" stop-color="#80d080"/></linearGradient></defs><rect x="0.5" y="0.5" width="14" height="12" rx=".8" fill="#fafafa" stroke="#98a0a8" stroke-width="1"/><rect x="1" y="1" width="13" height="1.3" fill="#dfe2e6"/><rect x="2" y="2.8" width="5" height="7.8" fill="url(#cx)"/><rect x="8.5" y="2.8" width="2.2" height="7.8" fill="#e2e2e2"/><rect x="11.6" y="3" width="2" height="4.5" fill="url(#cx2)"/></svg>
<div class="t " style="left:494px;top:459px;font-size:13px;color:#000">C:\OpenSSL-Win64\bin\openssl.exe</div>
<div class="a" style="left:1028px;top:451px;width:29px;height:20px;border:1px solid #6a5a50;border-top:none;border-radius:0 0 0 5px;background:linear-gradient(#f2ebe5 0,#e6dcd4 45%,#c8b4a4 50%,#d8c8ba 100%)"></div>
<div class="a" style="left:1055px;top:451px;width:29px;height:20px;border:1px solid #6a5a50;border-top:none;background:linear-gradient(#f2ebe5 0,#e6dcd4 45%,#c8b4a4 50%,#d8c8ba 100%)"></div>
<div class="a" style="left:1083px;top:451px;width:48px;height:20px;border:1px solid #5a2a20;border-top:none;border-radius:0 0 5px 0;background:linear-gradient(#eaa898 0,#d87860 45%,#c0401c 50%,#d05a38 100%)"></div>
<div class="a" style="left:1037px;top:461px;width:12px;height:5px;border:1px solid #3a3a58;border-radius:1px;background:#f6f6f8"></div>
<div class="a" style="left:1064px;top:456px;width:12px;height:10px;border:1px solid #3a3a58;border-radius:1px;background:#f0f0f4"></div>
<div class="a" style="left:1067px;top:459px;width:6px;height:4px;border:1px solid #3a3a58;background:#d8c8b8"></div>
<svg class="a" style="left:1101px;top:455px" width="13" height="11" viewBox="0 0 13 11"><path d="M2.2 1.8 L10.8 9.2 M10.8 1.8 L2.2 9.2" stroke="#3a3a58" stroke-width="4.2" stroke-linecap="square"/><path d="M2.2 1.8 L10.8 9.2 M10.8 1.8 L2.2 9.2" stroke="#fafafa" stroke-width="2.2" stroke-linecap="square"/></svg>
<div class="a" style="left:471px;top:481px;width:661px;height:403px;border:1px solid #f6ece2;background:#000"></div>
<div class="a" style="left:1113px;top:482px;width:17px;height:401px;background:linear-gradient(90deg,#e8e8e8,#f4f4f4 40%,#f0f0f0)"></div>
<div class="a" style="left:1130px;top:482px;width:1px;height:401px;background:#786a5c"></div>
<svg class="a" style="left:1118px;top:489px" width="9" height="6" viewBox="0 0 9 6"><path d="M0.8 4.8 L4.5 1 L8.2 4.8Z" fill="#3c3c3c"/></svg>
<div class="a" style="left:1114px;top:501px;width:15px;height:29px;border:1px solid #8a8a8a;border-radius:2px;background:linear-gradient(90deg,#fafafa,#ececec 40%,#c8c8c8)"></div>
<svg class="a" style="left:1117px;top:509px" width="9" height="10" viewBox="0 0 9 10"><path d="M1.5 2 H7.5 M1.5 4.5 H7.5 M1.5 7 H7.5" stroke="#4a4a4a" stroke-width="1"/></svg>
<div class="a" style="left:1132px;top:528px;width:6px;height:53px;background:linear-gradient(#e2c7ae,#efe2d6 60%,#f4ebe3)"></div>
<svg class="a" style="left:1118px;top:872px" width="9" height="6" viewBox="0 0 9 6"><path d="M0.8 1 L4.5 4.8 L8.2 1Z" fill="#3c3c3c"/></svg>
<div class="mono a" style="left:472px;top:485px">OpenSSL> genrsa -out rsa_private_key.pem
Generating RSA private key, 2048 bit long modulus
                                      +++

                       +++
e is 65537 (0x010001)
OpenSSL></div>
<div class="a" style="left:472px;top:526px;width:304px;height:2px;background:repeating-linear-gradient(90deg,transparent 0 3px,#c0c0c0 3px 6px,transparent 6px 8px)"></div>
<div class="a" style="left:472px;top:542px;width:640px;height:2px;background:repeating-linear-gradient(90deg,transparent 0 3px,#c0c0c0 3px 6px,transparent 6px 8px)"></div>
<div class="a" style="left:472px;top:558px;width:184px;height:2px;background:repeating-linear-gradient(90deg,transparent 0 3px,#c0c0c0 3px 6px,transparent 6px 8px)"></div>
<div class="t" style="left:545px;top:867px;color:#c0c0c0;font-size:16px;line-height:17px">半</div>
<div class="a" style="left:563px;top:873px;width:3px;height:2px;background:#c0c0c0"></div>
<div class="a" style="left:563px;top:877px;width:3px;height:2px;background:#c0c0c0"></div>
</body></html>
